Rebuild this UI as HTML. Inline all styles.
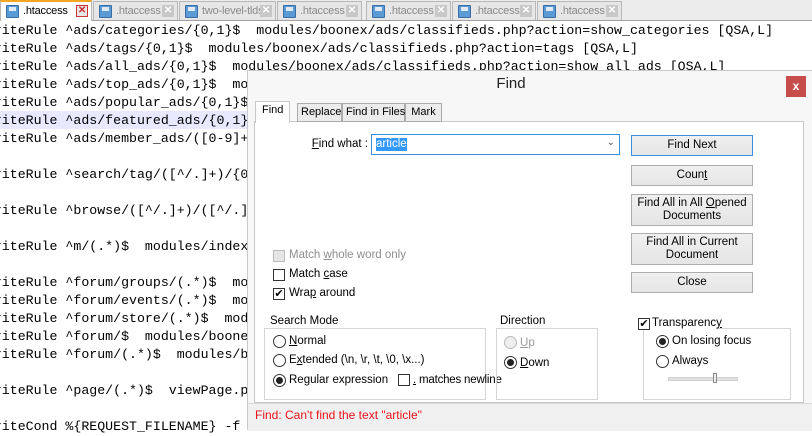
<!DOCTYPE html>
<html><head><meta charset="utf-8"><style>
*{margin:0;padding:0;box-sizing:border-box;white-space:nowrap}
body{width:812px;height:426px;overflow:hidden;background:#fff;position:relative;font-family:"Liberation Sans",sans-serif;font-size:11.5px;color:#000}
.tabs{position:absolute;left:0;top:0;width:812px;height:21px;background:#ececec;border-bottom:1px solid #a0a0a0}
.tab{position:absolute;top:1px;height:19px;border:1px solid #b8b8b8;border-bottom:none;background:#e6e6e6;color:#8a8a8a;font-size:11px;line-height:18px;padding-left:22px;overflow:hidden;letter-spacing:-0.2px}
.tab.act{background:#fff;color:#000;top:0;height:21px;border-top:2px solid #f5a623}
.tab .ic{position:absolute;left:5px;top:3px;width:13px;height:13px;background:#5a9bd5;border:1px solid #3a6ea5;border-radius:1px}
.tab .ic:after{content:"";position:absolute;left:2px;top:1px;width:7px;height:4px;background:#dfeaf6}
.tab .x{position:absolute;right:3px;top:3px;width:12px;height:12px;background:#c8c8c8;color:#fff;font-size:10px;line-height:12px;text-align:center;font-weight:bold}
.tab.act .x{background:#e7e7e7;color:#c33;border:1px solid #c33;line-height:10px}
.code{position:absolute;left:-30px;top:22px;font-family:"Liberation Mono",monospace;font-size:13.25px;line-height:18px;white-space:pre;color:#000}
.hl{position:absolute;left:0;top:111px;width:250px;height:18px;background:#e8e8ff}
.dlg{position:absolute;left:247px;top:70px;width:570px;height:360px;background:#f7f7f7;border:1px solid #c9c9c9}
.ttl{position:absolute;left:0;top:4px;width:526px;text-align:center;font-size:15px;color:#222}
.cls{position:absolute;left:538px;top:5px;width:20px;height:21px;background:#c74d4d;color:#fff;text-align:center;font-size:12px;line-height:20px;font-weight:bold}
.panel{position:absolute;left:6px;top:50px;width:550px;height:282px;background:#fff;border:1px solid #c9c9c9}
.pt{position:absolute;top:32px;height:19px;border:1px solid #acacac;background:#ececec;line-height:17px;padding:0 3px;font-size:11px;text-align:center}
.pt.act{background:#fff;top:30px;height:22px;border-bottom:none;border-color:#c9c9c9;padding:0 6px}
.abs{position:absolute}
.btn{position:absolute;left:383px;width:122px;border:1px solid #adadad;background:linear-gradient(#f0f0f0,#e5e5e5);text-align:center;font-size:11.5px;line-height:13px}
.cb{position:absolute;width:12px;height:12px;border:1px solid #333;background:#fff;font-size:11px;line-height:10px;text-align:center}
.rd{position:absolute;width:13px;height:13px;border:1px solid #333;border-radius:50%;background:#fff}
.rd.on:after{content:"";position:absolute;left:2px;top:2px;width:7px;height:7px;border-radius:50%;background:#222}
.grp{position:absolute;border:1px solid #d5d5d5}
.gl{position:absolute;background:#fff;padding:0 2px;font-size:11.5px}
.status{position:absolute;left:0;top:332px;width:570px;height:28px;background:#f0f0f0;border-top:1px solid #d8d8d8;color:#e8141c;font-size:12px;padding:4px 0 0 7px}
</style></head><body>
<div class="tabs">
<div class="tab act" style="left:0;width:92px">.htaccess<div class="ic"></div><div class="x">✕</div></div>
<div class="tab" style="left:93px;width:85px">.htaccess<div class="ic"></div><div class="x">✕</div></div>
<div class="tab" style="left:179px;width:97px">two-level-tlds<div class="ic"></div><div class="x">✕</div></div>
<div class="tab" style="left:277px;width:85px">.htaccess<div class="ic"></div><div class="x">✕</div></div>
<div class="tab" style="left:366px;width:85px">.htaccess<div class="ic"></div><div class="x">✕</div></div>
<div class="tab" style="left:452px;width:84px">.htaccess<div class="ic"></div><div class="x">✕</div></div>
<div class="tab" style="left:537px;width:85px">.htaccess<div class="ic"></div><div class="x">✕</div></div>
</div>
<div class="hl"></div>
<div class="code">RewriteRule ^ads/categories/{0,1}$  modules/boonex/ads/classifieds.php?action=show_categories [QSA,L]
RewriteRule ^ads/tags/{0,1}$  modules/boonex/ads/classifieds.php?action=tags [QSA,L]
RewriteRule ^ads/all_ads/{0,1}$  modules/boonex/ads/classifieds.php?action=show_all_ads [QSA,L]
RewriteRule ^ads/top_ads/{0,1}$  modules/boonex/ads/classifieds.php
RewriteRule ^ads/popular_ads/{0,1}$  modules
RewriteRule ^ads/featured_ads/{0,1}$  modules
RewriteRule ^ads/member_ads/([0-9]+)

RewriteRule ^search/tag/([^/.]+)/{0,1}$

RewriteRule ^browse/([^/.]+)/([^/.]+)

RewriteRule ^m/(.*)$  modules/index.php

RewriteRule ^forum/groups/(.*)$  modules
RewriteRule ^forum/events/(.*)$  modules
RewriteRule ^forum/store/(.*)$  modules
RewriteRule ^forum/$  modules/boonex/
RewriteRule ^forum/(.*)$  modules/boonex

RewriteRule ^page/(.*)$  viewPage.php

RewriteCond %{REQUEST_FILENAME} -f</div>
<div class="dlg">
<div class="ttl">Find</div>
<div class="cls">x</div>
<div class="panel"></div>
<div class="pt act" style="left:7px">Find</div>
<div class="pt" style="left:49px;width:45px">Replace</div>
<div class="pt" style="left:94px;width:63px">Find in Files</div>
<div class="pt" style="left:157px;width:37px">Mark</div>
<div class="abs" style="left:20px;width:100px;text-align:right;top:67px"><u>F</u>ind what :</div>
<div class="abs" style="left:123px;top:63px;width:249px;height:21px;border:1px solid #3c8fdc;background:#fff">
<span style="position:absolute;left:4px;top:3px;background:#3399ff;color:#fff;line-height:13px">article</span>
<span style="position:absolute;right:4px;top:2px;color:#555;font-size:10px">&#8964;</span></div>
<div class="btn" style="top:64px;height:21px;line-height:19px;border-color:#3c8fdc">Find Next</div>
<div class="btn" style="top:94px;height:21px;line-height:19px">Coun<u>t</u></div>
<div class="btn" style="top:123px;height:32px;padding-top:2px">Find All in All <u>O</u>pened<br>Documents</div>
<div class="btn" style="top:162px;height:32px;padding-top:2px">Find All in Current<br>Document</div>
<div class="btn" style="top:201px;height:21px;line-height:19px">Close</div>
<div class="cb" style="left:25px;top:179px;border-color:#bbb;background:#e6e6e6"></div>
<div class="abs" style="left:41px;top:178px;color:#8d8d8d">Match <u>w</u>hole word only</div>
<div class="cb" style="left:25px;top:198px"></div>
<div class="abs" style="left:41px;top:197px">Match <u>c</u>ase</div>
<div class="cb" style="left:25px;top:217px">✔</div>
<div class="abs" style="left:41px;top:216px">Wra<u>p</u> around</div>
<div class="grp" style="left:16px;top:257px;width:222px;height:72px"></div>
<div class="gl" style="left:20px;top:244px">Search Mode</div>
<div class="rd" style="left:25px;top:264px"></div><div class="abs" style="left:41px;top:264px"><u>N</u>ormal</div>
<div class="rd" style="left:25px;top:283px"></div><div class="abs" style="left:41px;top:283px">E<u>x</u>tended (\n, \r, \t, \0, \x...)</div>
<div class="rd on" style="left:25px;top:303px"></div><div class="abs" style="left:41px;top:303px">Re<u>g</u>ular expression</div>
<div class="cb" style="left:150px;top:303px"></div><div class="abs" style="left:165px;top:303px;letter-spacing:-0.2px"><u>.</u> matches newline</div>
<div class="grp" style="left:248px;top:257px;width:102px;height:72px"></div>
<div class="gl" style="left:250px;top:244px">Direction</div>
<div class="rd" style="left:256px;top:265px;border-color:#bbb;background:#eee"></div><div class="abs" style="left:272px;top:266px;color:#999"><u>U</u>p</div>
<div class="rd on" style="left:256px;top:285px"></div><div class="abs" style="left:272px;top:286px"><u>D</u>own</div>
<div class="grp" style="left:395px;top:257px;width:148px;height:72px"></div>
<div class="gl" style="left:388px;top:245px;width:80px;height:14px"></div>
<div class="cb" style="left:390px;top:247px">✔</div><div class="abs" style="left:404px;top:246px">Transparenc<u>y</u></div>
<div class="rd on" style="left:408px;top:264px"></div><div class="abs" style="left:424px;top:264px">On losing focus</div>
<div class="rd" style="left:408px;top:284px"></div><div class="abs" style="left:424px;top:284px">Always</div>
<div class="abs" style="left:420px;top:306px;width:70px;height:4px;background:#e2e2e2;border:1px solid #d0d0d0"></div>
<div class="abs" style="left:465px;top:302px;width:4px;height:10px;background:#eee;border:1px solid #888"></div>
<div class="status">Find: Can't find the text "article"</div>
</div>
</body></html>
